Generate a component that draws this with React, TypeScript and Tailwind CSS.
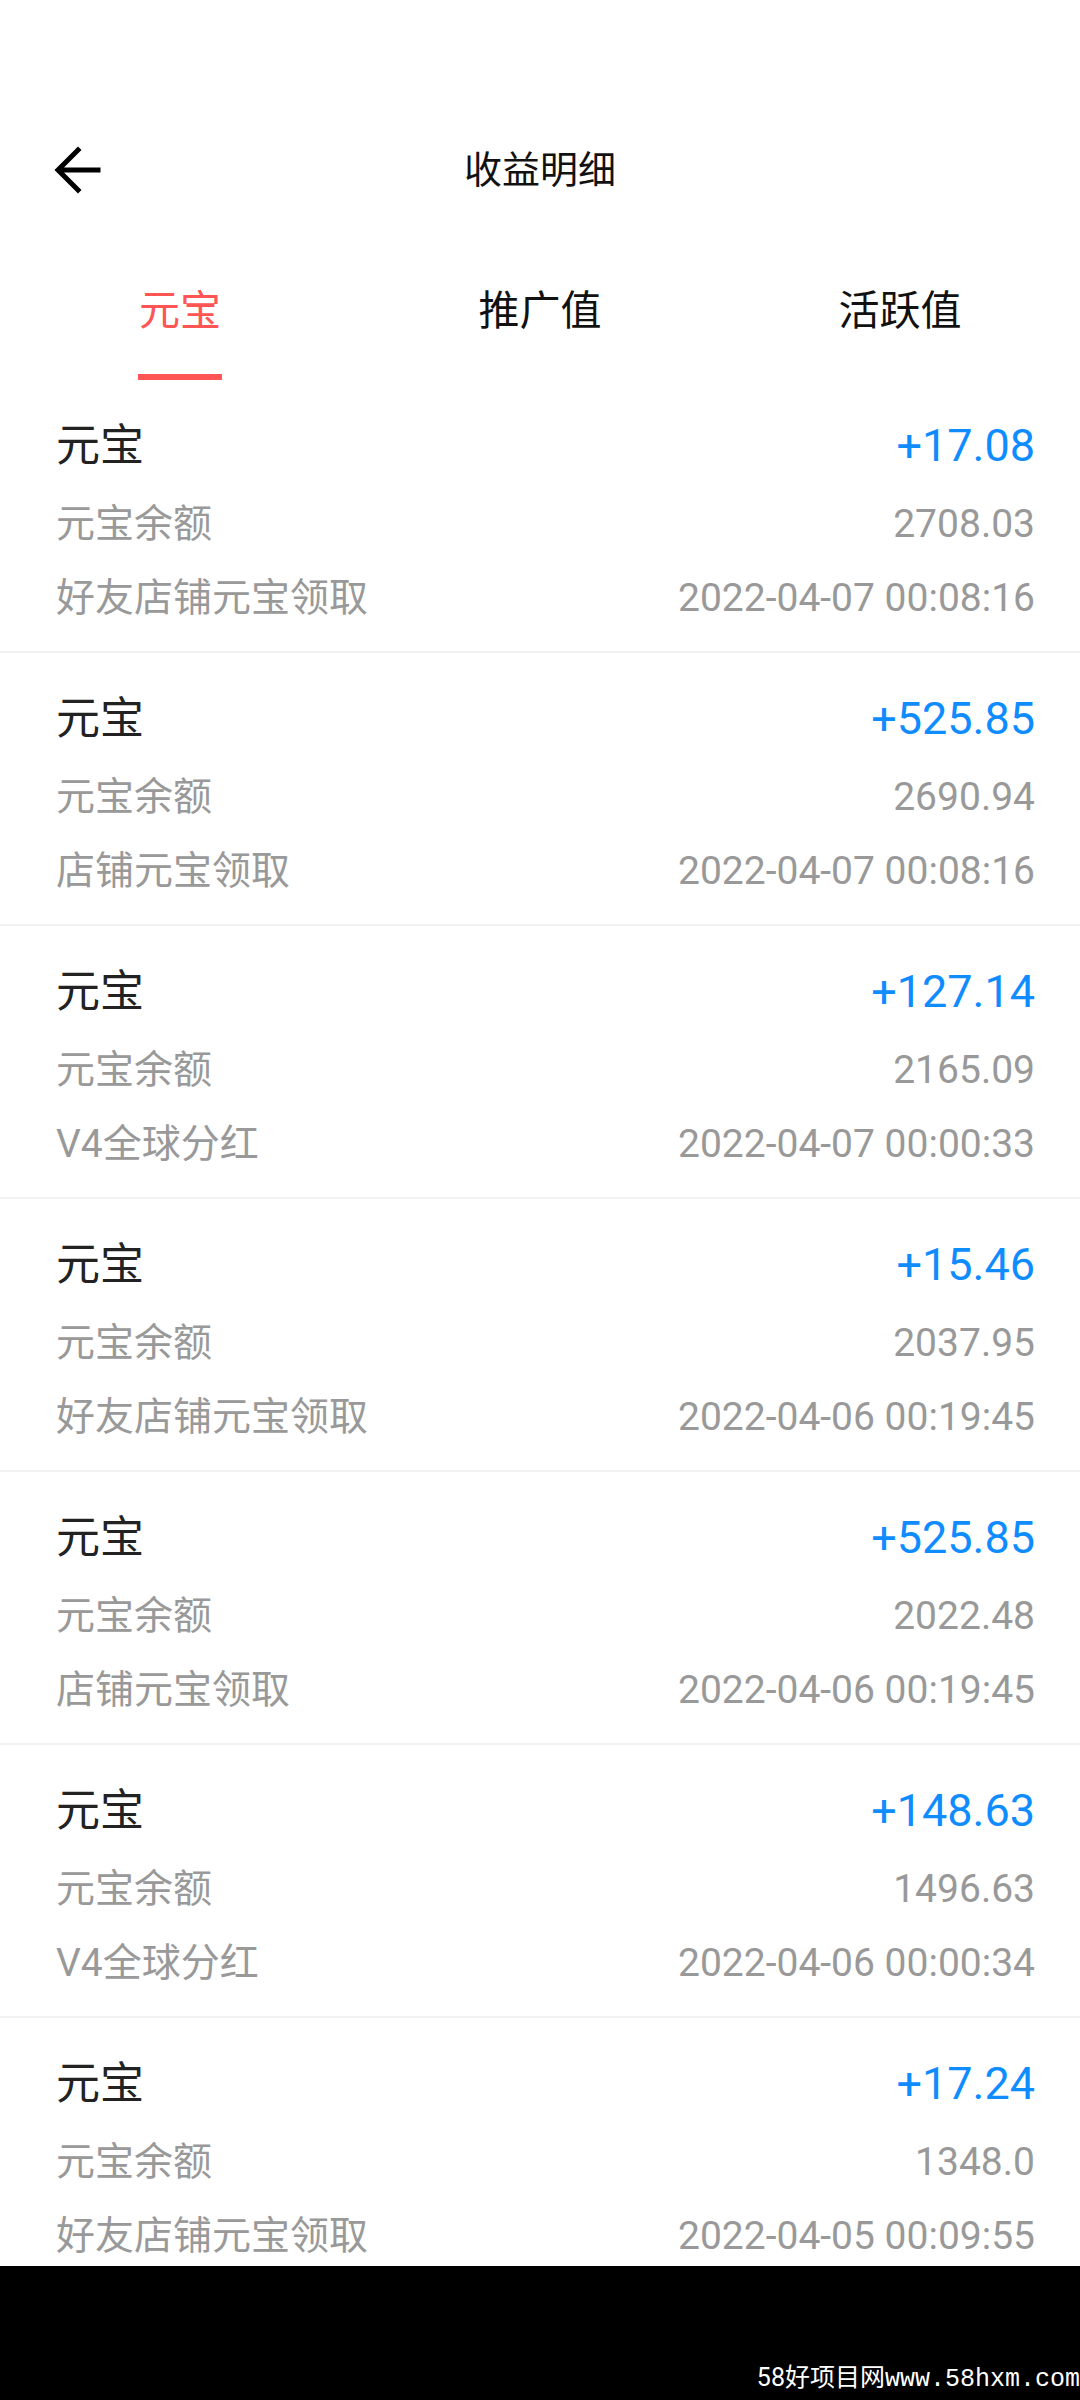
import React from "react";

const FONT = { fontFamily: 'Roboto, "Noto Sans CJK SC", sans-serif' };

const rows = [
  { amount: "+17.08", balance: "2708.03", source: "好友店铺元宝领取", time: "2022-04-07 00:08:16" },
  { amount: "+525.85", balance: "2690.94", source: "店铺元宝领取", time: "2022-04-07 00:08:16" },
  { amount: "+127.14", balance: "2165.09", source: "V4全球分红", time: "2022-04-07 00:00:33" },
  { amount: "+15.46", balance: "2037.95", source: "好友店铺元宝领取", time: "2022-04-06 00:19:45" },
  { amount: "+525.85", balance: "2022.48", source: "店铺元宝领取", time: "2022-04-06 00:19:45" },
  { amount: "+148.63", balance: "1496.63", source: "V4全球分红", time: "2022-04-06 00:00:34" },
  { amount: "+17.24", balance: "1348.0", source: "好友店铺元宝领取", time: "2022-04-05 00:09:55" },
];

const tabs = ["元宝", "推广值", "活跃值"];

function BackArrow() {
  return (
    <svg width="48" height="48" viewBox="0 0 48 48" fill="none">
      <path
        d="M44 24H6M24 4L4 24L24 44"
        stroke="#000"
        strokeWidth="5"
        strokeLinecap="square"
      />
    </svg>
  );
}

function Row({ item }: { item: (typeof rows)[number] }) {
  return (
    <div className="border-b-2 border-[#f2f2f2] pl-[56px] pr-[45px] pt-[40px] pb-[27px]">
      <div className="flex h-[52px] items-center justify-between">
        <span className="text-[44px] text-[#222]">元宝</span>
        <span className="text-[45px] text-[#0f8cff]">{item.amount}</span>
      </div>
      <div className="mt-[26px] flex h-[52px] items-center justify-between text-[39px] text-[#999]">
        <span>元宝余额</span>
        <span>{item.balance}</span>
      </div>
      <div className="mt-[22px] flex h-[52px] items-center justify-between text-[39px] text-[#999]">
        <span>{item.source}</span>
        <span>{item.time}</span>
      </div>
    </div>
  );
}

export default function App() {
  return (
    <div className="flex h-[2400px] w-[1080px] flex-col overflow-hidden bg-white" style={FONT}>
      <div className="h-[100px] shrink-0" />
      <div className="relative flex h-[140px] shrink-0 items-center justify-center">
        <button className="absolute left-[54px] top-[46px]">
          <BackArrow />
        </button>
        <h1 className="text-[38px] text-[#111]">收益明细</h1>
      </div>

      <div className="grid h-[140px] shrink-0 grid-cols-3 pt-[45px]">
        {tabs.map((t, i) => (
          <div key={t} className="flex flex-col items-center">
            <span
              className={
                i === 0
                  ? "h-[52px] text-[41px] leading-[52px] text-[#ff5555]"
                  : "h-[52px] text-[41px] leading-[52px] text-[#111]"
              }
            >
              {t}
            </span>
            {i === 0 && <div className="mt-[37px] h-[6px] w-[84px] bg-[#ff5555]" />}
          </div>
        ))}
      </div>

      <div className="flex-1 overflow-hidden">
        {rows.map((r, i) => (
          <Row key={i} item={r} />
        ))}
      </div>

      <div className="flex h-[134px] shrink-0 items-end justify-end bg-black pb-[5px]">
        <span className="text-[25px] leading-[30px] text-white">
          58好项目网<span style={{ fontFamily: '"Liberation Mono", monospace' }}>www.58hxm.com</span>
        </span>
      </div>
    </div>
  );
}
